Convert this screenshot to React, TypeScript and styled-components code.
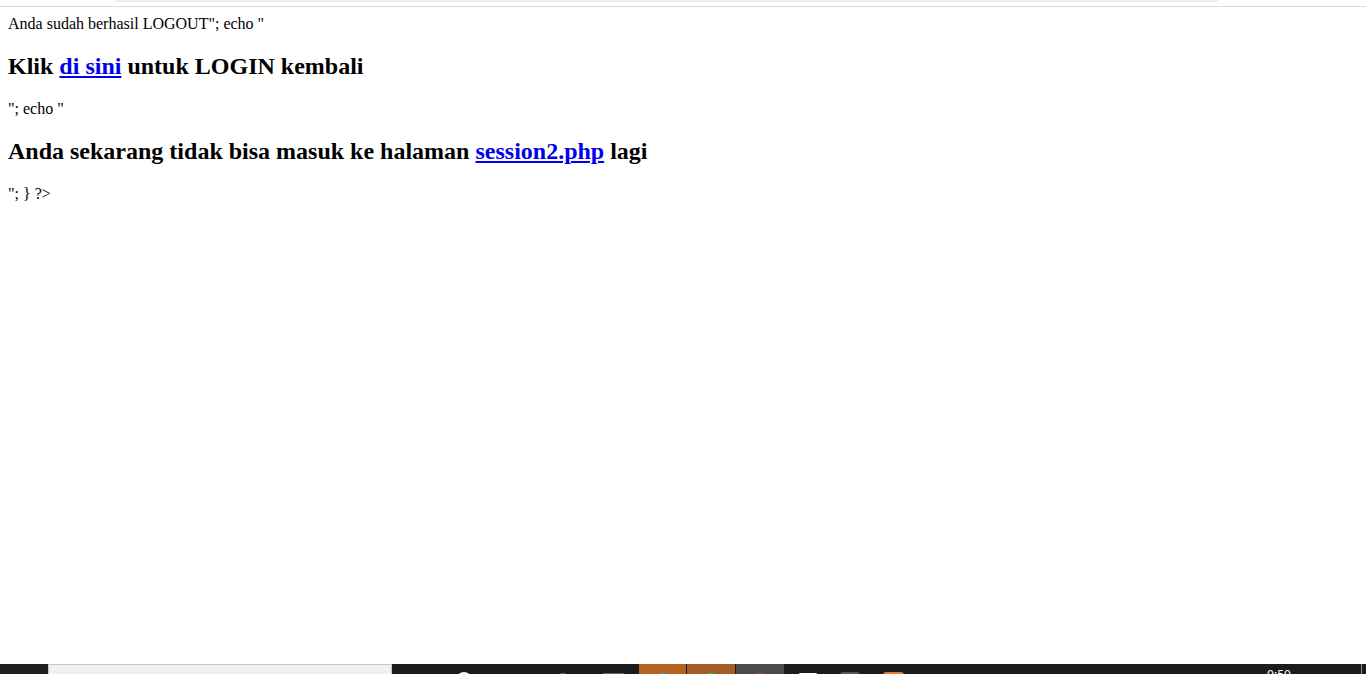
import React from 'react';
import styled, { createGlobalStyle } from 'styled-components';

//Global reset
const GlobalStyle = createGlobalStyle`
  html, body {
    margin: 0;
    padding: 0;
    overflow: hidden;
    background: #ffffff;
  }
`;

//Screen frame
const Screen = styled.div`
  display: flex;
  flex-direction: column;
  width: 1366px;
  height: 674px;
  overflow: hidden;
`;

//Browser chrome strip
const Chrome = styled.div`
  flex: none;
  height: 6px;
  background: #ffffff;
  border-bottom: 1px solid #dadce0;
`;

const AddressBottom = styled.div`
  margin-left: 115px;
  width: 1103px;
  height: 2px;
  background: #eeeeee;
  border-radius: 0 0 8px 8px;
`;

//Page
const Page = styled.div`
  flex: none;
  height: 657px;
  box-sizing: border-box;
  padding: 8px;
  font-family: 'Liberation Serif', 'Times New Roman', serif;
  font-size: 16px;
  color: #000000;
`;

const Line = styled.div`
  margin: 0;
`;

const Heading = styled.h2`
  font-size: 24px;
  font-weight: bold;
  margin: 19.92px 0;
`;

const Link = styled.a`
  color: #0000ee;
  text-decoration: underline;
`;

//Taskbar
const Taskbar = styled.div`
  flex: none;
  display: flex;
  height: 40px;
  background: #1c1c1c;
`;

const StartButton = styled.div`
  width: 48px;
  background: #1f1f1f;
`;

const SearchBox = styled.div`
  width: 344px;
  box-sizing: border-box;
  background: #f0f0f0;
  border: 1px solid #c6c6c6;
`;

const TaskButton = styled.div<{ $w: number; $bg?: string }>`
  display: flex;
  justify-content: center;
  align-items: flex-start;
  box-sizing: border-box;
  width: ${(p) => p.$w}px;
  padding-top: 8px;
  background: ${(p) => p.$bg || 'transparent'};
  border-right: ${(p) => (p.$bg ? '1px solid #1c1c1c' : 'none')};
`;

const Icon = styled.div<{
  $size: number;
  $color: string;
  $round?: boolean;
  $ring?: boolean;
  $top?: number;
}>`
  width: ${(p) => p.$size}px;
  height: ${(p) => p.$size}px;
  margin-top: ${(p) => p.$top || 0}px;
  box-sizing: border-box;
  border-radius: ${(p) => (p.$round ? '50%' : '3px')};
  background: ${(p) => (p.$ring ? 'transparent' : p.$color)};
  border: ${(p) => (p.$ring ? `2px solid ${p.$color}` : 'none')};
`;

const Tray = styled.div`
  display: flex;
  margin-left: auto;
`;

const Clock = styled.div`
  width: 70px;
  padding-top: 3px;
  text-align: center;
  font-family: 'Noto Sans', 'Liberation Sans', sans-serif;
  font-size: 12px;
  line-height: 16px;
  color: #ffffff;
`;

const TraySpacer = styled.div`
  width: 47px;
`;

const ShowDesktop = styled.div`
  width: 4px;
  border-left: 1px solid #8a8a8a;
`;

const App = () => {
  return (
    <Screen>
      <GlobalStyle />

      <Chrome>
        <AddressBottom />
      </Chrome>

      <Page>
        <Line>Anda sudah berhasil LOGOUT"; echo "</Line>
        <Heading>
          Klik <Link href="#">di sini</Link> untuk LOGIN kembali
        </Heading>
        <Line>"; echo "</Line>
        <Heading>
          Anda sekarang tidak bisa masuk ke halaman{' '}
          <Link href="#">session2.php</Link> lagi
        </Heading>
        <Line>"; {'}'} ?&gt;</Line>
      </Page>

      <Taskbar>
        <StartButton />
        <SearchBox />
        <TaskButton $w={48} />
        <TaskButton $w={48}>
          <Icon $size={16} $color="#ffffff" $round $ring />
        </TaskButton>
        <TaskButton $w={50} />
        <TaskButton $w={50}>
          <Icon $size={8} $color="#1e88e5" $round $top={1} />
        </TaskButton>
        <TaskButton $w={51}>
          <Icon $size={23} $color="#6a6580" $top={1} />
        </TaskButton>
        <TaskButton $w={48} $bg="#b4621f">
          <Icon $size={14} $color="#2ab0d8" $round $top={1} />
        </TaskButton>
        <TaskButton $w={49} $bg="#a35b27">
          <Icon $size={14} $color="#2ecc71" $round $top={1} />
        </TaskButton>
        <TaskButton $w={49} $bg="#4b4b4b">
          <Icon $size={12} $color="#c0404f" $round $top={1} />
        </TaskButton>
        <TaskButton $w={45}>
          <Icon $size={20} $color="#ffffff" $top={1} />
        </TaskButton>
        <TaskButton $w={40}>
          <Icon $size={20} $color="#555555" />
        </TaskButton>
        <TaskButton $w={46}>
          <Icon $size={21} $color="#e07b3a" />
        </TaskButton>

        <Tray>
          <Clock>0:50</Clock>
          <TraySpacer />
          <ShowDesktop />
        </Tray>
      </Taskbar>
    </Screen>
  );
};

export default App;
